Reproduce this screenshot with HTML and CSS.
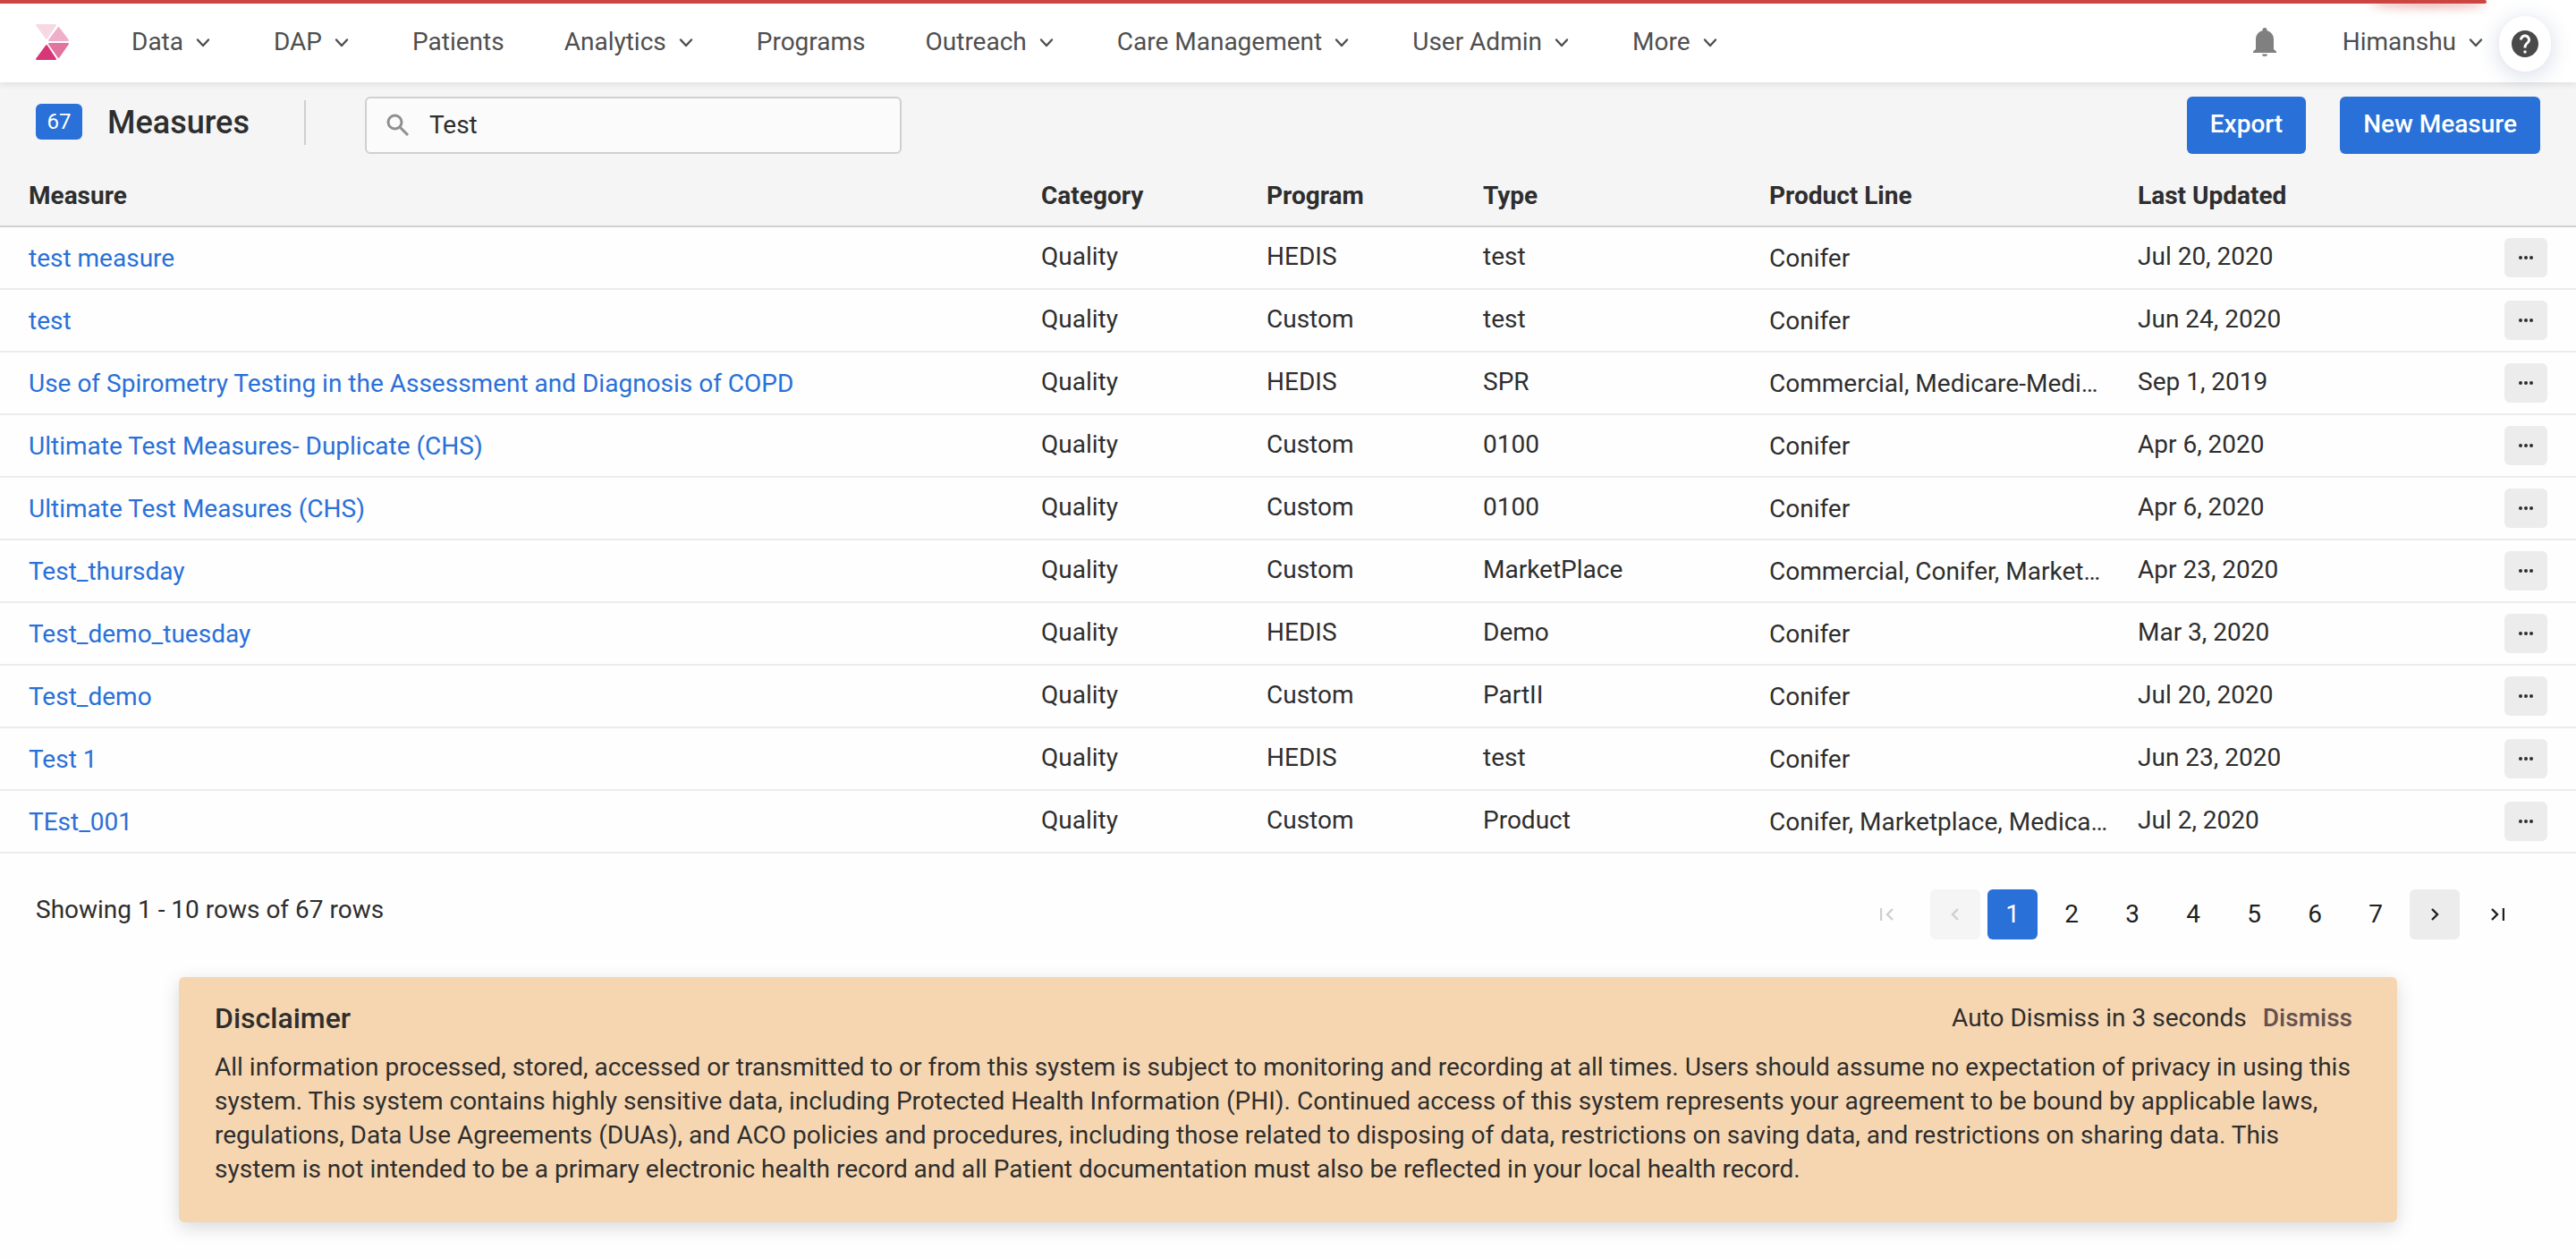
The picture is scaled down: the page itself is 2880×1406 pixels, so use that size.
FILE: index.html
```html
<!DOCTYPE html>
<html lang="en">
<head>
<meta charset="utf-8">
<title>Measures</title>
<link rel="stylesheet" href="styles.css">
</head>
<body>
<svg class="sprite" aria-hidden="true">
  <symbol id="chevron" viewBox="0 0 24 24"><path d="M6 8.500l6 6.500 6-6.500" fill="none" stroke="currentColor" stroke-width="2.400" stroke-linecap="round" stroke-linejoin="round"/></symbol>
  <symbol id="dots" viewBox="0 0 16 4"><circle cx="2" cy="2" r="2"/><circle cx="8" cy="2" r="2"/><circle cx="14" cy="2" r="2"/></symbol>
</svg>
<div class="progress"></div>
<header class="topbar">
  <a class="logo" href="#" aria-label="Home">
    <svg width="38" height="40" viewBox="0 0 38 40" stroke-width="2" stroke-linejoin="round">
      <path d="M1 1h21L12 16z" fill="#f7d9e4" stroke="#f7d9e4"/>
      <path d="M25.500 4L36 18H15z" fill="#efafc8" stroke="#efafc8"/>
      <path d="M15 22h21L25.500 37z" fill="#e2749f" stroke="#e2749f"/>
      <path d="M12 24L22 39H1z" fill="#d83777" stroke="#d83777"/>
    </svg>
  </a>
  <nav class="nav">
    <a href="#">Data<svg class="chev"><use href="#chevron"/></svg></a>
    <a href="#">DAP<svg class="chev"><use href="#chevron"/></svg></a>
    <a href="#">Patients</a>
    <a href="#">Analytics<svg class="chev"><use href="#chevron"/></svg></a>
    <a href="#">Programs</a>
    <a href="#">Outreach<svg class="chev"><use href="#chevron"/></svg></a>
    <a href="#">Care Management<svg class="chev"><use href="#chevron"/></svg></a>
    <a href="#">User Admin<svg class="chev"><use href="#chevron"/></svg></a>
    <a href="#">More<svg class="chev"><use href="#chevron"/></svg></a>
  </nav>
  <button class="bell" aria-label="Notifications">
    <svg width="26" height="32" viewBox="0 0 26 32" fill="#808080"><path d="M13 0a2.500 2.500 0 0 0-2.500 2.500v.7C6 4.300 3 8 3 13v11l-3 2.500V28h26v-1.500L23 24V13c0-5-3-8.700-7.500-9.800v-.7A2.500 2.500 0 0 0 13 0zM10 29.500a3 2.500 0 0 0 6 0z"/></svg>
  </button>
  <a class="user" href="#">Himanshu<svg class="chev"><use href="#chevron"/></svg></a>
  <button class="help" aria-label="Help">
    <svg width="36" height="36" viewBox="0 0 24 24" fill="#4a4a4a"><path d="M12 2C6.480 2 2 6.480 2 12s4.480 10 10 10 10-4.480 10-10S17.520 2 12 2zm1 17h-2v-2h2v2zm2.070-7.750l-.9.920C13.450 12.900 13 13.500 13 15h-2v-.5c0-1.100.450-2.100 1.170-2.830l1.240-1.260c.370-.360.590-.860.590-1.410 0-1.100-.9-2-2-2s-2 .9-2 2H8c0-2.210 1.790-4 4-4s4 1.790 4 4c0 .880-.360 1.680-.930 2.250z"/></svg>
  </button>
</header>
<main>
  <section class="toolbar">
    <span class="count">67</span>
    <h1>Measures</h1>
    <label class="search">
      <svg width="26" height="26" viewBox="0 0 26 26" fill="none" stroke="#8f8f8f" stroke-width="3"><circle cx="9.500" cy="9.500" r="7.500"/><path d="M15 15l9 9"/></svg>
      <input type="text" value="Test" aria-label="Search measures">
    </label>
    <div class="actions">
      <button class="primary">Export</button>
      <button class="primary">New Measure</button>
    </div>
  </section>
  <table>
    <colgroup><col><col class="c-category"><col class="c-program"><col class="c-type"><col class="c-line"><col class="c-updated"><col class="c-menu"></colgroup>
    <thead>
      <tr><th>Measure</th><th>Category</th><th>Program</th><th>Type</th><th>Product Line</th><th>Last Updated</th><th></th></tr>
    </thead>
    <tbody>
      <tr><td class="name"><a href="#">test measure</a></td><td>Quality</td><td>HEDIS</td><td>test</td><td class="line">Conifer</td><td>Jul 20, 2020</td><td class="menu"><button aria-label="More actions"><svg><use href="#dots"/></svg></button></td></tr>
      <tr><td class="name"><a href="#">test</a></td><td>Quality</td><td>Custom</td><td>test</td><td class="line">Conifer</td><td>Jun 24, 2020</td><td class="menu"><button aria-label="More actions"><svg><use href="#dots"/></svg></button></td></tr>
      <tr><td class="name"><a href="#">Use of Spirometry Testing in the Assessment and Diagnosis of COPD</a></td><td>Quality</td><td>HEDIS</td><td>SPR</td><td class="line">Commercial, Medicare-Medicaid</td><td>Sep 1, 2019</td><td class="menu"><button aria-label="More actions"><svg><use href="#dots"/></svg></button></td></tr>
      <tr><td class="name"><a href="#">Ultimate Test Measures- Duplicate (CHS)</a></td><td>Quality</td><td>Custom</td><td>0100</td><td class="line">Conifer</td><td>Apr 6, 2020</td><td class="menu"><button aria-label="More actions"><svg><use href="#dots"/></svg></button></td></tr>
      <tr><td class="name"><a href="#">Ultimate Test Measures (CHS)</a></td><td>Quality</td><td>Custom</td><td>0100</td><td class="line">Conifer</td><td>Apr 6, 2020</td><td class="menu"><button aria-label="More actions"><svg><use href="#dots"/></svg></button></td></tr>
      <tr><td class="name"><a href="#">Test_thursday</a></td><td>Quality</td><td>Custom</td><td>MarketPlace</td><td class="line">Commercial, Conifer, Marketplace</td><td>Apr 23, 2020</td><td class="menu"><button aria-label="More actions"><svg><use href="#dots"/></svg></button></td></tr>
      <tr><td class="name"><a href="#">Test_demo_tuesday</a></td><td>Quality</td><td>HEDIS</td><td>Demo</td><td class="line">Conifer</td><td>Mar 3, 2020</td><td class="menu"><button aria-label="More actions"><svg><use href="#dots"/></svg></button></td></tr>
      <tr><td class="name"><a href="#">Test_demo</a></td><td>Quality</td><td>Custom</td><td>PartII</td><td class="line">Conifer</td><td>Jul 20, 2020</td><td class="menu"><button aria-label="More actions"><svg><use href="#dots"/></svg></button></td></tr>
      <tr><td class="name"><a href="#">Test 1</a></td><td>Quality</td><td>HEDIS</td><td>test</td><td class="line">Conifer</td><td>Jun 23, 2020</td><td class="menu"><button aria-label="More actions"><svg><use href="#dots"/></svg></button></td></tr>
      <tr><td class="name"><a href="#">TEst_001</a></td><td>Quality</td><td>Custom</td><td>Product</td><td class="line">Conifer, Marketplace, Medicare</td><td>Jul 2, 2020</td><td class="menu"><button aria-label="More actions"><svg><use href="#dots"/></svg></button></td></tr>
    </tbody>
  </table>
  <footer class="footer">
    <p>Showing 1 - 10 rows of 67 rows</p>
    <div class="pager">
      <button class="first" disabled aria-label="First page"><svg width="16" height="16" viewBox="0 0 16 16"><path d="M1 1v14M14 2L8 8l6 6"/></svg></button>
      <button class="step" disabled aria-label="Previous page"><svg width="16" height="16" viewBox="0 0 16 16"><path d="M11 2L5 8l6 6"/></svg></button>
      <button class="current">1</button>
      <button>2</button>
      <button>3</button>
      <button>4</button>
      <button>5</button>
      <button>6</button>
      <button>7</button>
      <button class="step" aria-label="Next page"><svg width="16" height="16" viewBox="0 0 16 16"><path d="M5 2l6 6-6 6"/></svg></button>
      <button class="last" aria-label="Last page"><svg width="16" height="16" viewBox="0 0 16 16"><path d="M15 1v14M2 2l6 6-6 6"/></svg></button>
    </div>
  </footer>
</main>
<aside class="disclaimer">
  <div class="disclaimer-head">
    <h2>Disclaimer</h2>
    <span>Auto Dismiss in 3 seconds</span>
    <button>Dismiss</button>
  </div>
  <p>All information processed, stored, accessed or transmitted to or from this system is subject to monitoring and recording at all times. Users should assume no expectation of privacy in using this system. This system contains highly sensitive data, including Protected Health Information (PHI). Continued access of this system represents your agreement to be bound by applicable laws, regulations, Data Use Agreements (DUAs), and ACO policies and procedures, including those related to disposing of data, restrictions on saving data, and restrictions on sharing data. This system is not intended to be a primary electronic health record and all Patient documentation must also be reflected in your local health record.</p>
</aside>
</body>
</html>
```
FILE: styles.css
```css
* { box-sizing: border-box; }

body {
  margin: 0;
  background: #fefefe;
  color: #2e2e2e;
  font: 28px/38px Roboto, "Liberation Sans", sans-serif;
}

button, input { font: inherit; color: inherit; }
button { border: 0; padding: 0; background: none; cursor: pointer; }
a { color: inherit; text-decoration: none; }
h1, h2, p { margin: 0; }
.sprite { position: absolute; width: 0; height: 0; }

.progress {
  position: absolute;
  z-index: 2;
  top: 0;
  left: 0;
  right: 100px;
  height: 4px;
  border-radius: 0 2px 2px 0;
  background: #cb4541;
}
.progress::after {
  content: "";
  position: absolute;
  right: 0;
  width: 130px;
  height: 4px;
  border-radius: 50%;
  box-shadow: 0 2px 12px #cb4541;
}

/* Top navigation */
.topbar {
  position: relative;
  display: flex;
  align-items: center;
  height: 92px;
  padding: 2px 28px 0 40px;
  background: #fff;
  box-shadow: 0 2px 8px rgba(0, 0, 0, .1);
  color: #4f4f4f;
}
.logo { display: flex; margin-right: 69px; }
.nav { display: flex; flex: 1; gap: 67px; }
.nav a, .user { display: flex; align-items: center; gap: 10px; }
.chev { width: 24px; height: 24px; margin-top: 2px; }
.bell { display: flex; margin-right: 74px; }
.user { margin-right: 14px; }
.help {
  display: flex;
  align-items: center;
  justify-content: center;
  width: 58px;
  height: 62px;
  margin-top: 4px;
  border-radius: 29px;
  background: #fff;
  box-shadow: 0 4px 24px rgba(40, 70, 130, .2);
}

/* Title, search and actions */
.toolbar {
  display: flex;
  align-items: flex-start;
  padding: 16px 40px 12px;
  background: #f5f5f5;
}
.count {
  width: 52px;
  margin: 8px 28px 0 0;
  border-radius: 6px;
  background: #2970d8;
  color: #fff;
  font-size: 24px;
  line-height: 40px;
  text-align: center;
}
h1 {
  margin-top: 4px;
  padding-right: 61px;
  border-right: 2px solid #d0d0d0;
  font-size: 36px;
  font-weight: 500;
  line-height: 50px;
}
.search {
  display: flex;
  align-items: center;
  gap: 22px;
  width: 600px;
  height: 64px;
  margin-left: 66px;
  padding: 0 22px;
  border: 2px solid #d0d0d0;
  border-radius: 6px;
  background: #fbfbfb;
}
.search input { flex: 1; min-width: 0; border: 0; padding: 0; outline: 0; background: none; }
.actions { display: flex; gap: 38px; margin-left: auto; }
.primary {
  height: 64px;
  padding: 0 26px 2px;
  border-radius: 6px;
  background: #2970d8;
  color: #fff;
  font-weight: 500;
}

/* Measures table */
table { width: 100%; border-collapse: separate; border-spacing: 0; table-layout: fixed; }
.c-category { width: 252px; }
.c-program { width: 242px; }
.c-type { width: 320px; }
.c-line { width: 412px; }
.c-updated { width: 410px; }
.c-menu { width: 112px; }
th {
  height: 70px;
  padding: 2px 0 0 32px;
  border-bottom: 2px solid #d0d0d0;
  background: #f5f5f5;
  font-weight: 700;
  text-align: left;
}
td { height: 70px; padding: 0 0 2px 32px; border-bottom: 2px solid #ececec; }
.name, .line { padding-top: 2px; padding-bottom: 0; }
.name { color: #2970d8; }
.line { overflow: hidden; text-overflow: ellipsis; white-space: nowrap; }
.menu { padding-bottom: 0; }
.menu button {
  display: flex;
  align-items: center;
  justify-content: center;
  width: 48px;
  height: 44px;
  border-radius: 6px;
  background: #ececec;
}
.menu svg { width: 16px; height: 4px; fill: #2e2e2e; }

/* Row count and pagination */
.footer {
  display: flex;
  align-items: flex-start;
  justify-content: space-between;
  padding: 40px 58px 42px 40px;
}
.footer p { padding-top: 4px; }
.pager { display: flex; gap: 8px; color: #1f1f1f; }
.pager button {
  display: flex;
  align-items: center;
  justify-content: center;
  width: 60px;
  height: 56px;
  border-radius: 6px;
}
.pager svg { fill: none; stroke: currentColor; stroke-width: 2.400; }
.pager button:disabled { color: #cfcfcf; }
.pager .step, .pager .current { width: 56px; }
.pager .step { background: #ececec; }
.pager .step:disabled { background: #f5f5f5; }
.pager .current { background: #2970d8; color: #fff; }
.pager .first { margin-right: 10px; }
.pager .last { margin-left: 4px; }

/* Disclaimer */
.disclaimer {
  margin: 0 200px 40px;
  padding: 24px 50px 30px 40px;
  border-radius: 6px;
  background: #f6d6b1;
  box-shadow: 0 6px 20px rgba(0, 0, 0, .15);
}
.disclaimer-head { display: flex; align-items: center; margin-bottom: 14px; }
.disclaimer-head h2 { flex: 1; font-size: 32px; font-weight: 500; line-height: 44px; }
.disclaimer-head button { margin-left: 18px; color: #65504f; font-weight: 500; }
.disclaimer p { padding-bottom: 10px; }
```
